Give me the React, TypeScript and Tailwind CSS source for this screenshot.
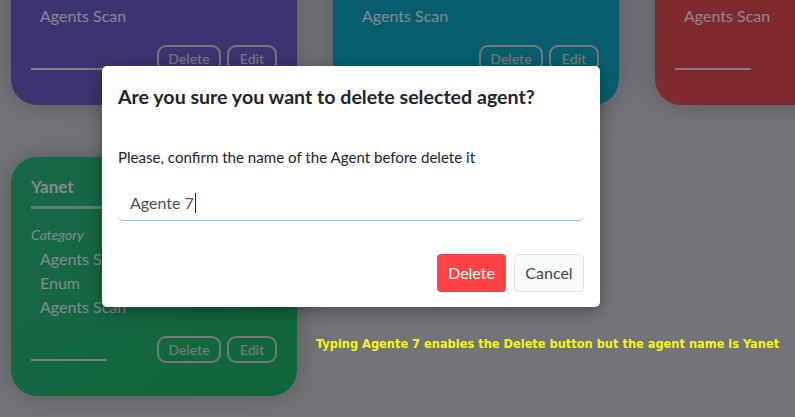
import React from "react";

const cards = [
  { bg: "bg-[#3c3470]", name: "Agent" },
  { bg: "bg-[#065e6d]", name: "Agent" },
  { bg: "bg-[#7e2a2c]", name: "Agent" },
  { bg: "bg-[linear-gradient(135deg,#176846_0%,#0f6637_100%)]", name: "Yanet" },
];

function Card({ bg, name }: { bg: string; name: string }) {
  return (
    <div
      className={`relative w-[286px] h-[239px] shrink-0 rounded-[26px] ${bg} px-[20px] pt-[18px] shadow-[0_0_28px_rgba(40,40,50,0.35)] text-[#898a8f]`}
    >
      <div className="text-[17px] font-bold leading-[24px] h-[24px]">{name}</div>
      <div className="mt-[7px] h-[3px] w-full bg-[#7b7d80] opacity-80" />
      <div className="mt-[17px] text-[14px] italic leading-[18px]">Category</div>
      <div className="pl-[9px] mt-[3px] text-[16px] leading-[24px]">
        <div>Agents Summary</div>
        <div>Enum</div>
        <div>Agents Scan</div>
      </div>
      <div className="mt-[17px] flex items-end justify-between">
        <div className="mb-[2px] h-[2px] w-[76px] bg-[#7b7d80]" />
        <div className="flex gap-[6px]">
          <div className="h-[27px] w-[64px] rounded-[9px] border-2 border-[#75777a] text-[14px] font-semibold flex items-center justify-center text-[#76787b]">
            Delete
          </div>
          <div className="h-[27px] w-[50px] rounded-[9px] border-2 border-[#75777a] text-[14px] font-semibold flex items-center justify-center text-[#76787b]">
            Edit
          </div>
        </div>
      </div>
    </div>
  );
}

export default function App() {
  return (
    <div
      className="relative w-[795px] h-[417px] overflow-hidden bg-[#737478]"
      style={{ fontFamily: "Lato, 'Noto Sans', sans-serif" }}
    >
      <div className="mt-[-134px] ml-[11px] grid grid-cols-[286px_286px_286px] gap-x-[36px] gap-y-[52px]">
        {cards.map((c, i) => (
          <Card key={i} bg={c.bg} name={c.name} />
        ))}
      </div>

      {/* annotation */}
      <div
        className="absolute left-[316px] top-[334px] text-[12.7px] font-bold text-[#f4f41c] whitespace-nowrap"
        style={{ fontFamily: "'DejaVu Sans Condensed', 'DejaVu Sans', sans-serif" }}
      >
        Typing Agente 7 enables the Delete button but the agent name is Yanet
      </div>

      {/* modal */}
      <div className="absolute left-[102px] top-[66px] w-[498px] h-[241px] rounded-[5px] bg-white shadow-[0_4px_16px_rgba(0,0,0,0.35)] px-[16px]">
        <div className="pt-[18px] text-[19.6px] font-bold leading-[26px] text-[#212529]">
          Are you sure you want to delete selected agent?
        </div>
        <div className="mt-[36px] text-[15.1px] leading-[22px] text-[#212529]">
          Please, confirm the name of the Agent before delete it
        </div>
        <div className="mt-[17px] h-[36px] flex items-center rounded-b-[5px] border-b-[1.5px] border-[#8fbdf0] pl-[12px] text-[16px] text-[#4a5158]">
          Agente 7<span className="ml-[1px] inline-block h-[20px] w-[1px] bg-[#222]" />
        </div>
        <div className="mt-[33px] flex justify-end gap-[8px]">
          <div className="h-[38px] w-[69px] rounded-[4px] bg-[#ff4347] text-white text-[16px] flex items-center justify-center">
            Delete
          </div>
          <div className="h-[38px] w-[70px] rounded-[4px] bg-[#f8f9fa] border border-[#dfe1e4] text-[#3e4449] text-[16px] flex items-center justify-center">
            Cancel
          </div>
        </div>
      </div>
    </div>
  );
}
